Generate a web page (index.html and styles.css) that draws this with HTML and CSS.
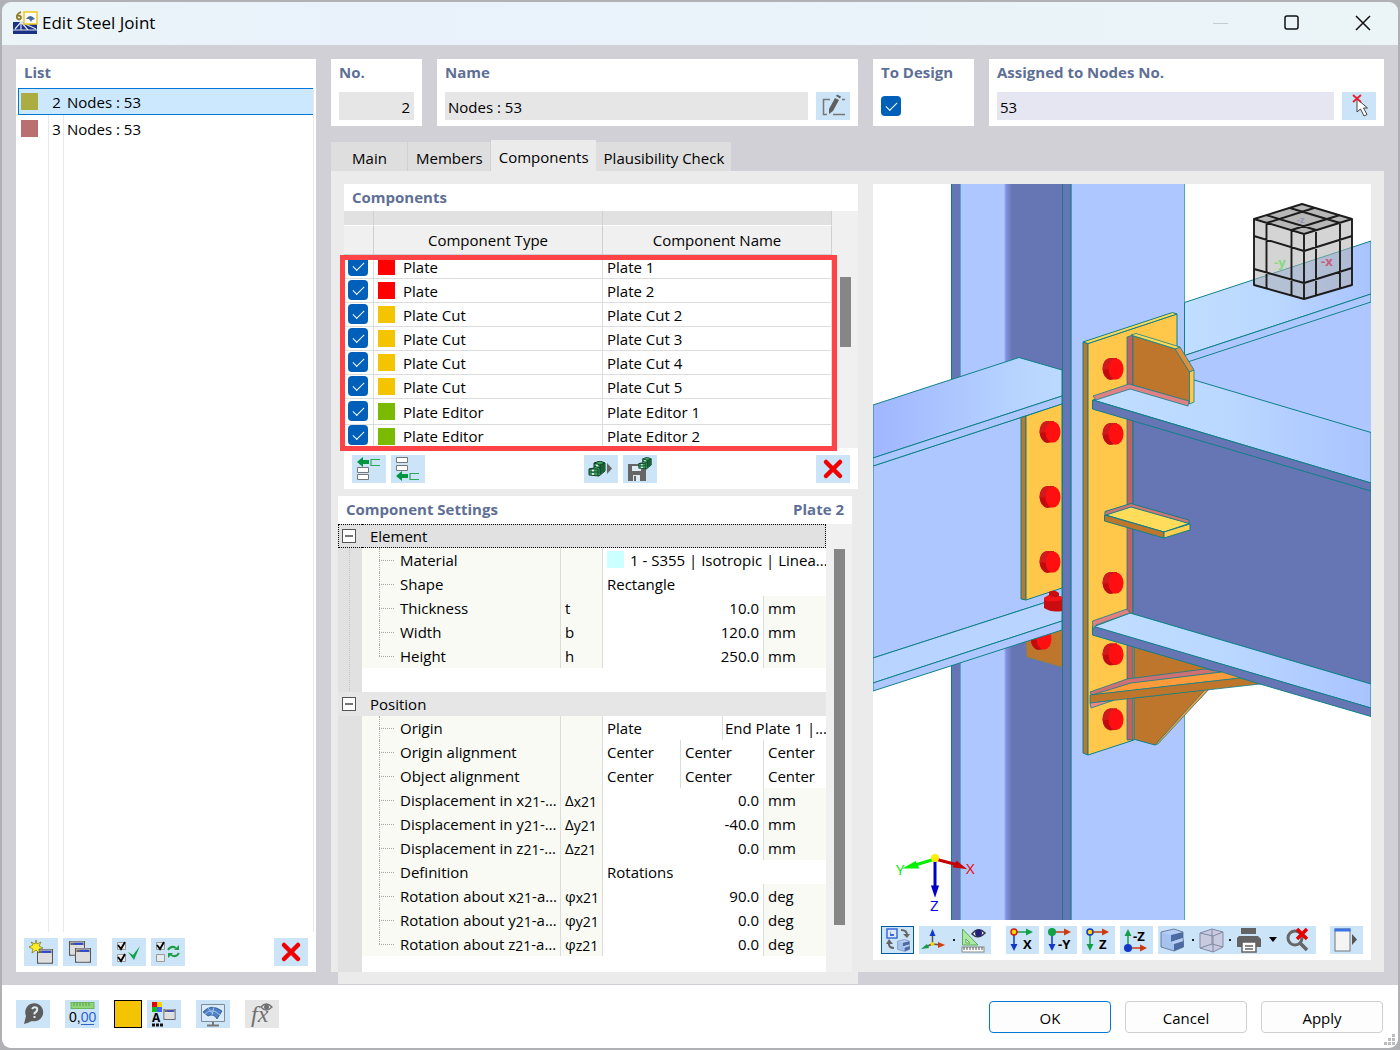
FILE: index.html
```html
<!DOCTYPE html>
<html lang="en">
	<head>
		<meta charset="utf-8"/>
		<title>Edit Steel Joint</title>
		<link rel="stylesheet" href="styles.css">
	</head>
	<body>
		<svg class="defs" aria-hidden="true">
			<symbol id="i-delete" viewBox="0 0 34 28">
				<path d="M10 7 L24 21 M24 7 L10 21" stroke="#f00000" stroke-width="4.5" stroke-linecap="round"/>
			</symbol>
			<symbol id="i-window" viewBox="0 0 16 16">
				<rect x="0" y="0" width="16" height="15" fill="#fff" stroke="#555" stroke-width="1.5"/>
				<path d="M1 3 H15" stroke="#666" stroke-width="3"/>
				<path d="M5 3 H14" stroke="#2b48e0" stroke-width="2"/>
				<rect x="1" y="5" width="14" height="9.500" fill="#dedede"/>
			</symbol>
			<symbol id="i-cabinet" viewBox="0 0 18 16">
				<path d="M1 8 L6 7 V2 L12 0 L17 2 V10 L11 15 L1 14 Z" fill="#3aa364" stroke="#163c26"/>
				<path d="M12 4 L17 2 V10 L12 13 Z" fill="#176638"/>
				<path d="M1 8 H10 V15 M1 11 H10 M6 2 L12 4 V13 M6 5 L12 7 M12 4 L17 2" fill="none" stroke="#163c26"/>
				<circle cx="5" cy="9.500" r="1" fill="#fff"/><circle cx="5" cy="13" r="1" fill="#fff"/><circle cx="9" cy="4.500" r="1" fill="#fff"/>
			</symbol>
			<symbol id="i-solid" viewBox="0 0 24 24">
				<path d="M1 4 L14 1 L23 4 L11 7 Z" fill="#b5cdf5"/>
				<path d="M1 4 L11 7 V14 L14 16 V23 L1 19 Z" fill="#a6c2ee"/>
				<path d="M11 7 L23 4 V10 L11 14 Z" fill="#4c6ba3"/>
				<path d="M11 14 L23 10 L23.500 13 L14 16 Z" fill="#b5cdf5"/>
				<path d="M14 16 L23.500 13 V19 L14 23 Z" fill="#4c6ba3"/>
				<path d="M1 4 L14 1 L23 4 V10 L23.500 13 V19 L14 23 L1 19 Z" fill="none" stroke="#53688e" stroke-width=".8"/>
			</symbol>
		</svg>

		<div class="window">
			<header class="titlebar">
				<svg class="appIcon" viewBox="0 0 25 24">
					<rect x="0" y="11" width="24" height="12" fill="#1c3183"/>
					<path d="M0 19 H24 M2 18 L8 11 L15 19 M8 11 V19 M8 11 L23 18" stroke="#dbe4f0" stroke-width="1.200" fill="none"/>
					<rect x="11" y="1" width="13" height="12" fill="#fff" stroke="#f1c91d" stroke-width="1.500"/>
					<path d="M13 8 Q17 2 22 8 L19 9 L18 11 L16 8 Z" fill="#43699d"/>
					<path d="M8 1 Q3 3 4 7 Q6 10 8 7 Q8 4 5 5" fill="none" stroke="#8b7b1e" stroke-width="1.800"/>
				</svg>
				<h1 class="title">Edit Steel Joint</h1>
				<button class="winBtn" type="button" aria-label="Minimize">
					<svg viewBox="0 0 18 18"><path d="M1 9.500 H16" stroke="#c6cdd0"/></svg>
				</button>
				<button class="winBtn" type="button" aria-label="Maximize">
					<svg viewBox="0 0 18 18"><rect x="2" y="2" width="13" height="13" rx="2" fill="none" stroke="#111" stroke-width="1.500"/></svg>
				</button>
				<button class="winBtn" type="button" aria-label="Close">
					<svg viewBox="0 0 18 18"><path d="M2 2 L16 16 M16 2 L2 16" stroke="#111" stroke-width="1.500"/></svg>
				</button>
			</header>

			<main class="content">
				<section class="card listCard">
					<h2 class="heading">List</h2>
					<div class="list">
						<table class="listTable">
							<tr class="selected">
								<td class="listColor"><span class="swatch olive"></span></td>
								<td class="listNo">2</td>
								<td class="listName">Nodes : 53</td>
							</tr>
							<tr>
								<td class="listColor"><span class="swatch rose"></span></td>
								<td class="listNo">3</td>
								<td class="listName">Nodes : 53</td>
							</tr>
						</table>
					</div>
					<div class="toolbar listTools">
						<button class="tool" type="button" aria-label="New">
							<svg viewBox="0 0 34 28">
								<use href="#i-window" x="13" y="11" width="16" height="15"/>
								<path d="M12 2 L13 6 L17 4 L15 8 L19 10 L15 11 L15 15 L12 12 L8 15 L9 11 L5 9 L9 7 L7 4 L11 6 Z" fill="#ffee22" stroke="#76701a" stroke-width=".7"/>
							</svg>
						</button>
						<button class="tool" type="button" aria-label="Copy">
							<svg viewBox="0 0 34 28">
								<use href="#i-window" x="6" y="3" width="16" height="15"/>
								<use href="#i-window" x="12" y="10" width="16" height="15"/>
							</svg>
						</button>
						<button class="tool spaced" type="button" aria-label="Select all">
							<svg viewBox="0 0 34 28">
								<path d="M5.500 4.500 h8 v7 h-8 z M5.500 16.500 h8 v7 h-8 z" fill="#eee" stroke="#999"/>
								<path d="M6 7 L9 11 L13 4 M6 19 L9 23 L13 16" fill="none" stroke="#000" stroke-width="1.800"/>
								<path d="M16 14 L21 17 L28 8 L22 22 Z" fill="#12a24b"/>
							</svg>
						</button>
						<button class="tool" type="button" aria-label="Invert selection">
							<svg viewBox="0 0 34 28">
								<path d="M5.500 4.500 h8 v7 h-8 z M5.500 16.500 h8 v7 h-8 z" fill="#e5edf2" stroke="#999"/>
								<path d="M6 7 L9 11 L13 4" fill="none" stroke="#000" stroke-width="1.800"/>
								<path d="M17 12 Q20 7 25 10 M28 15 Q25 20 20 17" fill="none" stroke="#1f9d48" stroke-width="2"/>
								<path d="M28 7 V12 H23 Z M17 20 V15 H22 Z" fill="#1f9d48"/>
							</svg>
						</button>
						<button class="tool last" type="button" aria-label="Delete"><svg viewBox="0 0 34 28"><use href="#i-delete"/></svg></button>
					</div>
				</section>

				<div class="editor">
					<div class="topCards">
						<div class="topLeft">
							<div class="card field noField">
								<label class="heading" for="no">No.</label>
								<input class="textBox right" id="no" type="text" value="2" readonly>
							</div>
							<div class="card field grow">
								<label class="heading" for="name">Name</label>
								<div class="fieldRow">
									<input class="textBox" id="name" type="text" value="Nodes : 53" readonly>
									<button class="tool" type="button" aria-label="Edit name">
										<svg viewBox="0 0 34 28">
											<path d="M14 7.500 H7.500 V22.500 H11 M17 22.500 H29 M26 7.500 H29" fill="none" stroke="#777" stroke-width="1.500"/>
											<path d="M13 17 L19 6 L23 8 L17 19 L13 22 Z" fill="#5f5f5f"/>
											<path d="M20 4 L21 2.500 L25 4.500 L24 6.500 Z" fill="#5f5f5f"/>
										</svg>
									</button>
								</div>
							</div>
						</div>
						<div class="topRight">
							<div class="card field designField">
								<label class="heading" for="design">To Design</label>
								<div class="fieldRow"><input class="check" id="design" type="checkbox" checked></div>
							</div>
							<div class="card field grow">
								<label class="heading" for="nodes">Assigned to Nodes No.</label>
								<div class="fieldRow">
									<input class="textBox lilac" id="nodes" type="text" value="53">
									<button class="tool" type="button" aria-label="Pick nodes">
										<svg viewBox="0 0 34 28">
											<path d="M15 7 V20 L18.500 17 L22 24 L25 22.500 L21.500 16 H25.500 Z" fill="#fff" stroke="#444"/>
											<path d="M11 3 L19 10 M19 3 L11 10" stroke="#e5202c" stroke-width="1.800"/>
										</svg>
									</button>
								</div>
							</div>
						</div>
					</div>

					<nav class="tabs">
						<button class="tab first" type="button">Main</button>
						<button class="tab" type="button">Members</button>
						<button class="tab active" type="button">Components</button>
						<button class="tab" type="button">Plausibility Check</button>
					</nav>

					<div class="tabPanel">
						<div class="leftPane">
							<section class="card components">
								<h2 class="heading">Components</h2>
								<div class="gridWrap">
									<table class="grid">
										<colgroup><col class="colCheck"><col><col></colgroup>
										<thead>
											<tr class="letters"><th></th><th></th><th></th></tr>
											<tr><th></th><th>Component Type</th><th>Component Name</th></tr>
										</thead>
										<tbody>
											<tr><td><input class="check" type="checkbox" aria-label="Plate 1" checked></td><td><span class="swatch red"></span>Plate</td><td>Plate 1</td></tr>
											<tr><td><input class="check" type="checkbox" aria-label="Plate 2" checked></td><td><span class="swatch red"></span>Plate</td><td>Plate 2</td></tr>
											<tr><td><input class="check" type="checkbox" aria-label="Plate Cut 2" checked></td><td><span class="swatch amber"></span>Plate Cut</td><td>Plate Cut 2</td></tr>
											<tr><td><input class="check" type="checkbox" aria-label="Plate Cut 3" checked></td><td><span class="swatch amber"></span>Plate Cut</td><td>Plate Cut 3</td></tr>
											<tr><td><input class="check" type="checkbox" aria-label="Plate Cut 4" checked></td><td><span class="swatch amber"></span>Plate Cut</td><td>Plate Cut 4</td></tr>
											<tr><td><input class="check" type="checkbox" aria-label="Plate Cut 5" checked></td><td><span class="swatch amber"></span>Plate Cut</td><td>Plate Cut 5</td></tr>
											<tr class="tall"><td><input class="check" type="checkbox" aria-label="Plate Editor 1" checked></td><td><span class="swatch green"></span>Plate Editor</td><td>Plate Editor 1</td></tr>
											<tr class="bottom"><td><input class="check" type="checkbox" aria-label="Plate Editor 2" checked></td><td><span class="swatch green"></span>Plate Editor</td><td>Plate Editor 2</td></tr>
										</tbody>
									</table>
									<div class="track"><div class="thumb gridThumb"></div></div>
									<div class="marker"></div>
								</div>
								<div class="toolbar componentTools">
									<button class="tool" type="button" aria-label="Insert before">
										<svg viewBox="0 0 34 28">
											<path d="M5.500 12.500 h11 v5 h-11 z M5.500 19.500 h11 v5 h-11 z" fill="#fff" stroke="#777"/>
											<path d="M28 4.500 H19 V10.500 H28" fill="none" stroke="#2fa45b" stroke-width="1.200"/>
											<path d="M5 7 L11 2 V5 H17 V9 H11 V12 Z" fill="#009540"/>
										</svg>
									</button>
									<button class="tool" type="button" aria-label="Insert after">
										<svg viewBox="0 0 34 28">
											<path d="M5.500 2.500 h11 v5 h-11 z M5.500 10.500 h11 v5 h-11 z" fill="#fff" stroke="#777"/>
											<path d="M28 18.500 H19 V24.500 H28" fill="none" stroke="#2fa45b" stroke-width="1.200"/>
											<path d="M5 21 L11 16 V19 H17 V23 H11 V26 Z" fill="#009540"/>
										</svg>
									</button>
									<button class="tool library" type="button" aria-label="Load from library">
										<svg viewBox="0 0 34 28"><use href="#i-cabinet" x="4" y="6" width="18" height="16"/><path d="M23 8 L28 13.500 L23 19 Z" fill="#666"/></svg>
									</button>
									<button class="tool" type="button" aria-label="Save to library">
										<svg viewBox="0 0 34 28">
											<path d="M5 9 H19 L23 14 V26 H5 Z" fill="#666"/>
											<path d="M9 11 H18 V16 H9 Z M10 20 H17 V26 H10 Z" fill="#dfeaf2"/>
											<path d="M12 21 V26" stroke="#666" stroke-width="2"/>
											<use href="#i-cabinet" x="15" y="2" width="14" height="13"/>
										</svg>
									</button>
									<button class="tool last" type="button" aria-label="Delete component"><svg viewBox="0 0 34 28"><use href="#i-delete"/></svg></button>
								</div>
							</section>

							<section class="card settings">
								<h2 class="heading between"><span>Component Settings</span><span>Plate 2</span></h2>
								<div class="gridWrap settingsBody">
									<div class="treeWrap">
										<table class="tree">
											<colgroup>
												<col class="cGutter"><col class="cLabel"><col class="cSymbol"><col class="cV1"><col class="cV2"><col class="cV3"><col class="cUnit">
											</colgroup>
											<tr class="group focus"><td><button class="toggle" type="button" aria-label="Collapse Element"></button></td><td colspan="6">Element</td></tr>
											<tr class="line"><td></td><td>Material</td><td></td><td class="tight" colspan="4"><span class="swatch aqua"></span>1 - S355 | Isotropic | Linea...</td></tr>
											<tr class="line"><td></td><td>Shape</td><td></td><td colspan="4">Rectangle</td></tr>
											<tr class="line"><td></td><td>Thickness</td><td>t</td><td class="num" colspan="3">10.0</td><td class="unit">mm</td></tr>
											<tr class="line"><td></td><td>Width</td><td>b</td><td class="num" colspan="3">120.0</td><td class="unit">mm</td></tr>
											<tr class="line end"><td></td><td>Height</td><td>h</td><td class="num" colspan="3">250.0</td><td class="unit">mm</td></tr>
											<tr class="blank"><td></td><td colspan="6"></td></tr>
											<tr class="group"><td><button class="toggle" type="button" aria-label="Collapse Position"></button></td><td colspan="6">Position</td></tr>
											<tr class="line"><td></td><td>Origin</td><td></td><td colspan="2">Plate</td><td class="cut tight" colspan="2">End Plate 1 |...</td></tr>
											<tr class="line"><td></td><td>Origin alignment</td><td></td><td>Center</td><td class="cut" colspan="2">Center</td><td class="cut">Center</td></tr>
											<tr class="line"><td></td><td>Object alignment</td><td></td><td>Center</td><td class="cut" colspan="2">Center</td><td class="cut">Center</td></tr>
											<tr class="line"><td></td><td>Displacement in x<sub>21</sub>-axis</td><td>Δ<sub>x21</sub></td><td class="num" colspan="3">0.0</td><td class="unit">mm</td></tr>
											<tr class="line"><td></td><td>Displacement in y<sub>21</sub>-axis</td><td>Δ<sub>y21</sub></td><td class="num" colspan="3">-40.0</td><td class="unit">mm</td></tr>
											<tr class="line"><td></td><td>Displacement in z<sub>21</sub>-axis</td><td>Δ<sub>z21</sub></td><td class="num" colspan="3">0.0</td><td class="unit">mm</td></tr>
											<tr class="line"><td></td><td>Definition</td><td></td><td colspan="4">Rotations</td></tr>
											<tr class="line"><td></td><td>Rotation about x<sub>21</sub>-axis</td><td>φ<sub>x21</sub></td><td class="num" colspan="3">90.0</td><td class="unit">deg</td></tr>
											<tr class="line"><td></td><td>Rotation about y<sub>21</sub>-axis</td><td>φ<sub>y21</sub></td><td class="num" colspan="3">0.0</td><td class="unit">deg</td></tr>
											<tr class="line end"><td></td><td>Rotation about z<sub>21</sub>-axis</td><td>φ<sub>z21</sub></td><td class="num" colspan="3">0.0</td><td class="unit">deg</td></tr>
										</table>
									</div>
									<div class="track"><div class="thumb treeThumb"></div></div>
								</div>
							</section>
							<div class="strip"></div>
						</div>

						<section class="card view">
							<div class="sceneBox">
							<svg class="scene" viewBox="873 184 498 736" preserveAspectRatio="xMidYMid slice">
								<defs>
									<linearGradient id="fillet"><stop offset="0" stop-color="#aec7ff"/><stop offset=".25" stop-color="#8092de"/><stop offset="1" stop-color="#6675b4"/></linearGradient>
									<linearGradient id="topLeft"><stop offset="0" stop-color="#a0b6ff"/><stop offset=".8" stop-color="#b8d5ff"/><stop offset="1" stop-color="#bcdaff"/></linearGradient>
									<linearGradient id="topRight"><stop offset="0" stop-color="#c0deff"/><stop offset=".5" stop-color="#bad7ff"/><stop offset="1" stop-color="#a9c3ff"/></linearGradient>
									<g id="bolt">
										<path d="M-10.500 0 Q-10 -10 -3 -11 L4 -11 V10 L-3 11 Q-10 9 -10.500 0 Z" fill="#c00c10"/>
										<path d="M-3 -11 L4 -11 L-3 0 L-10.500 1 Q-10 -10 -3 -11 Z" fill="#d01a1d"/>
										<ellipse cx="3" cy="0" rx="7.500" ry="10.500" fill="#ff0f10"/>
									</g>
								</defs>
								<rect x="700" y="0" width="900" height="1100" fill="#fff"/>

								<!-- column -->
								<g stroke="#0f8088">
									<rect x="951.500" y="100" width="9" height="900" fill="#6675b4"/>
									<rect x="960.500" y="100" width="45" height="900" fill="#aec7ff" stroke="none"/>
									<rect x="1012" y="100" width="50" height="900" fill="#6675b4" stroke="none"/>
									<rect x="1004" y="100" width="8" height="900" fill="url(#fillet)" stroke="none"/>
									<rect x="1071" y="100" width="113.500" height="900" fill="#aec7ff" stroke="#4fa6b6"/>
								</g>

								<!-- bracket below the left beam -->
								<path d="M1026 640 L1062 628 V667 L1027 657 Z" fill="#be762d" stroke="#7a8850" stroke-width=".7"/>
								<use href="#bolt" x="1041" y="639"/>

								<!-- left beam -->
								<g stroke="#0f8088">
									<path d="M873 466 L1062 404 V597 L873 658 Z" fill="#aec7ff"/>
									<path d="M873 405 L1019 357.500 L1062 370 V396 L873 458 Z" fill="url(#topLeft)"/>
									<path d="M873 458 L1062 396 V404 L873 466 Z" fill="#aec7ff"/>
									<path d="M873 658 L1062 597 V621 L873 683 Z" fill="#b8d4ff"/>
									<path d="M873 683 L1062 621 V630 L873 691 Z" fill="#aec7ff"/>
									<path d="M1021 417.500 L1026 416 V600 L1021 599 Z" fill="#be762d"/>
									<path d="M1026 416 L1062 404 V588 L1026 600 Z" fill="#ffc84b"/>
								</g>
								<use href="#bolt" x="1050" y="432"/>
								<use href="#bolt" x="1050" y="497"/>
								<use href="#bolt" x="1050" y="562"/>
								<path d="M1044 598 L1049 595 V592 Q1054 589 1059 593 V596 L1062 597 V611 Q1052 613 1044 608 Z" fill="#c80c10"/>
								<path d="M1044 598 L1049 595 Q1054 599 1059 596 L1062 597 V600 Q1052 603 1044 600 Z" fill="#f01416"/>
								<rect x="1062.500" y="100" width="8.500" height="900" fill="#6675b4" stroke="#0f8088"/>

								<!-- right beam behind -->
								<g stroke="#0f8088">
									<path d="M1184.500 363 L1371 302 V433 L1184 380 Z" fill="#aec7ff" stroke="none"/>
									<path d="M1184.500 302.500 L1371 241 V294 L1184.500 355.500 Z" fill="url(#topRight)"/>
									<path d="M1184.500 355.500 L1371 294 V302 L1184.500 363 Z" fill="#aec7ff"/>
								</g>

								<!-- lower gusset -->
								<g stroke="#0f8088">
									<path d="M1130 640 L1220 670 L1130 680 Z" fill="#be762d"/>
									<path d="M1133 698 L1209 689 L1155 745 L1133 739 Z" fill="#be762d"/>
									<path d="M1205 689.500 L1210 688 L1158 744 L1155 745 Z" fill="#f7993b" stroke-width=".7"/>
								</g>

								<!-- end plate -->
								<g stroke="#0f8088">
									<path d="M1083 342 L1088 343.500 V755 L1083 753 Z" fill="#be762d"/>
									<path d="M1088 343.500 L1177 314 V400 L1134 420 V740 L1088 755 Z" fill="#ffc84b"/>
									<path d="M1083 342 L1172.500 312.500 L1177 314 L1088 343.500 Z" fill="#ffdb59"/>
									<path d="M1127 337 L1133 335 V740 L1127 740 Z" fill="#c06264" stroke-width=".8"/>
								</g>

								<!-- front beam -->
								<g stroke="#0f8088">
									<path d="M1133 420 L1371 490 V684 L1133 614 Z" fill="#6675b4"/>
									<path d="M1093 400 L1130 388 L1194 380 L1371 432.500 V483 Z" fill="url(#topRight)"/>
									<path d="M1092.500 400 L1371 483 V491 L1092.500 409 Z" fill="#6675b4"/>
									<path d="M1093 627 L1130 613 L1371 684 V708 Z" fill="url(#topRight)"/>
									<path d="M1092.500 626 L1371 708 V716.500 L1092.500 635 Z" fill="#6675b4"/>
								</g>

								<!-- upper stiffener -->
								<g stroke="#0f8088" stroke-width=".8">
									<path d="M1133 336 L1176 349 L1189.500 372 V402 L1133 385 Z" fill="#be762d"/>
									<path d="M1131 335 L1136 333.500 L1180 347 L1176 349 Z" fill="#ffdb59"/>
									<path d="M1175 349 L1180 347 L1194 370 L1189.500 372 Z" fill="#dc9040"/>
									<path d="M1093 396 L1129 384 L1189 401 L1188 406 L1130 389 L1096 400 Z" fill="#df8084"/>
									<path d="M1189.500 372 L1194 370 V402 L1189.500 404 Z" fill="#ffc84b"/>
									<path d="M1093 630 L1092.500 621 L1127 609 L1130 613 L1096 625 Z" fill="#df8084"/>
								</g>

								<!-- middle tab -->
								<g stroke="#0f8088">
									<path d="M1105 511.500 L1131 503.500 L1189 520 V525 L1131 508 L1105 516 Z" fill="#cf7376"/>
									<path d="M1106 515 L1131 507 L1189 523.500 L1164 532 Z" fill="#ffdc5a"/>
									<path d="M1104.500 515 L1164 532 V538 L1104.500 521 Z" fill="#be762d"/>
									<path d="M1164 532 L1190 524 V530 L1164 538 Z" fill="#ffcf50"/>
								</g>

								<!-- sloped stiffener -->
								<g stroke="#0f8088" stroke-width=".8">
									<path d="M1090 692 L1127 679 L1205 669 L1222 672 L1130 684 L1092 696 Z" fill="#cf7074"/>
									<path d="M1092 695 L1131 683 L1222 672 L1241 678 Z" fill="#fb9b3c"/>
									<path d="M1090 695 L1240 678 L1260 684 L1090 703 Z" fill="#be762d"/>
									<path d="M1090 703 L1113 700.500 L1091 708 Z" fill="#ef878a"/>
								</g>
								<use href="#bolt" x="1113" y="369"/>
								<use href="#bolt" x="1113" y="434"/>
								<use href="#bolt" x="1113" y="583"/>
								<use href="#bolt" x="1113" y="654.500"/>
								<use href="#bolt" x="1113" y="719.500"/>

								<!-- view cube -->
								<g class="cube">
									<path d="M1254 219 L1302 204 L1352 219 L1304 234 Z" fill="#aaa" fill-opacity=".85"/>
									<path d="M1254 219 L1304 234 V299 L1254 285 Z" fill="#b0b0b0" fill-opacity=".55"/>
									<path d="M1304 234 L1352 219 V285 L1304 299 Z" fill="#b0b0b0" fill-opacity=".55"/>
									<path d="M1254 219 L1302 204 L1352 219 V285 L1304 299 L1254 285 Z M1254 219 L1304 234 L1352 219 M1304 234 V299 M1266 215 L1316 230 V296 M1290 208 L1340 223 V289 M1314 208 L1266.500 223 V289 M1340 215 L1291.500 230 V296 M1254 236 L1304 251 L1352 236 M1254 269 L1304 283 L1352 268" fill="none" stroke="#1c1c1c" stroke-width="1.900" stroke-linejoin="round"/>
									<text x="1274" y="267" fill="#82dc82">-y</text>
									<text x="1321" y="266" fill="#cc5b7c">-x</text>
									<text x="1297" y="223" fill="#9292c0" class="cubeTop">-z</text>
								</g>

								<!-- axes -->
								<g stroke-width="3">
									<path d="M935 859 L912 866" stroke="#00f000"/>
									<path d="M908 867 L915 863 L917 867 Z" fill="#00f000" stroke="#00f000"/>
									<path d="M935 859 L958 865" stroke="#c80000"/>
									<path d="M962 867 L957 863 L955 866 Z" fill="#c80000" stroke="#c80000"/>
									<path d="M935 859 V890" stroke="#0000c8"/>
									<path d="M935 893 L933 887 H937 Z" fill="#0000c8" stroke="#0000c8"/>
									<circle cx="935" cy="858" r="4" fill="#ffee00"/>
								</g>
								<g class="axisText">
									<text x="896" y="875" fill="#00e800">Y</text>
									<text x="966" y="874" fill="#f00000">X</text>
									<text x="930" y="911" fill="#0000f0">Z</text>
								</g>
							</svg>
							</div>

							<div class="toolbar viewTools">
								<button class="tool pressed" type="button" aria-label="Toggle view">
									<svg viewBox="0 0 34 28">
										<rect x="6" y="3" width="10" height="9" fill="#dfe9fa" stroke="#3a6bd6" stroke-width="1.500"/>
										<path d="M9 5 V10 H13 V8 H10" fill="#3a6bd6"/>
										<path d="M20 4 Q26 4 26 9 M8 16 Q7 22 13 22" fill="none" stroke="#666" stroke-width="2"/>
										<path d="M22 8 H29 L26 12 Z M5 18 L8 13 L12 18 Z" fill="#666"/>
										<use href="#i-solid" x="16" y="13" width="13" height="13"/>
									</svg>
								</button>
								<div class="toolGroup">
									<button class="tool" type="button" aria-label="Axes">
										<svg viewBox="0 0 34 28">
											<path d="M13.500 18 V7 M13.500 18 L6 21 M13.500 18 L22 19" stroke="#555" stroke-width="1.500"/>
											<path d="M13.500 3 L16.500 10 H10.500 Z" fill="#1238d0"/><path d="M2 23 L8 18 L10 22 Z" fill="#149c47"/><path d="M26 19 L19 16 V22 Z" fill="#d53b0c"/><circle cx="13.500" cy="18" r="2" fill="#ffd500"/>
										</svg>
									</button>
									<span class="dot"></span>
									<button class="tool" type="button" aria-label="Show dimensions">
										<svg viewBox="0 0 34 28">
											<path d="M6.500 3 V19 H22 Z" fill="#aee8a4" stroke="#5aa955"/><path d="M10 13 V17 H14 Z" fill="#fff" stroke="#5aa955"/>
											<rect x="6" y="21" width="22" height="5" fill="#fff" stroke="#888"/><path d="M8 21 V24 M11 21 V24 M14 21 V24 M17 21 V24 M20 21 V24 M23 21 V24 M26 21 V24" stroke="#555"/>
											<path d="M16 8 Q22 0 29 7 Q22 14 16 8 Z" fill="#fff" stroke="#33334d" stroke-width="1.500"/><circle cx="22.500" cy="7" r="3.500" fill="#21217c"/>
										</svg>
									</button>
								</div>
								<button class="tool spaced" type="button" aria-label="View X">
									<svg viewBox="0 0 34 28">
										<path d="M8 6 H24" stroke="#14a04a" stroke-width="1.500"/><path d="M27 6 L20 2.500 V9.500 Z" fill="#14a04a"/>
										<path d="M8 6 V20" stroke="#1238c8" stroke-width="1.500"/><path d="M8 25 L4.500 18 H11.500 Z" fill="#1238c8"/>
										<circle cx="8" cy="6" r="3" fill="#ffd500" stroke="#cc2010" stroke-width="1.500"/><text x="17" y="23" class="iconText">X</text>
									</svg>
								</button>
								<button class="tool" type="button" aria-label="View -Y">
									<svg viewBox="0 0 34 28">
										<path d="M8 6 H24" stroke="#cc3a10" stroke-width="1.500"/><path d="M27 6 L20 2.500 V9.500 Z" fill="#cc3a10"/>
										<path d="M8 6 V20" stroke="#1238c8" stroke-width="1.500"/><path d="M8 25 L4.500 18 H11.500 Z" fill="#1238c8"/>
										<circle cx="8" cy="6" r="4" fill="#14a04a"/><text x="14" y="23" class="iconText">-Y</text>
									</svg>
								</button>
								<button class="tool" type="button" aria-label="View Z">
									<svg viewBox="0 0 34 28">
										<path d="M8 6 H24" stroke="#cc3a10" stroke-width="1.500"/><path d="M27 6 L20 2.500 V9.500 Z" fill="#cc3a10"/>
										<path d="M8 6 V20" stroke="#14a04a" stroke-width="1.500"/><path d="M8 25 L4.500 18 H11.500 Z" fill="#14a04a"/>
										<circle cx="8" cy="6" r="3" fill="#ffd500" stroke="#1238c8" stroke-width="1.500"/><text x="17" y="23" class="iconText">Z</text>
									</svg>
								</button>
								<button class="tool" type="button" aria-label="View -Z">
									<svg viewBox="0 0 34 28">
										<path d="M8 22 H24" stroke="#cc3a10" stroke-width="1.500"/><path d="M27 22 L20 18.500 V25.500 Z" fill="#cc3a10"/>
										<path d="M8 22 V8" stroke="#14a04a" stroke-width="1.500"/><path d="M8 3 L4.500 10 H11.500 Z" fill="#14a04a"/>
										<circle cx="8" cy="22" r="4" fill="#1238c8"/><text x="13" y="15" class="iconText">-Z</text>
									</svg>
								</button>
								<div class="toolGroup">
									<button class="tool" type="button" aria-label="Solid display"><svg viewBox="0 0 34 28"><use href="#i-solid" x="2" y="2" width="24" height="24"/></svg></button>
									<span class="dot"></span>
									<button class="tool" type="button" aria-label="Box display">
										<svg viewBox="0 0 34 28">
											<path d="M5 7 L17 3 L28 6 V21 L18 26 L5 22 Z" fill="#c8cbe0" stroke="#8388a3"/>
											<path d="M5 7 L18 10 L28 6 M18 10 V26 M17 3 V18 L5 22 M17 18 L28 21" fill="none" stroke="#8388a3"/>
										</svg>
									</button>
									<span class="dot"></span>
									<button class="tool" type="button" aria-label="Print">
										<svg viewBox="0 0 34 28">
											<path d="M9 2 H24 V8 H9 Z M7 10 H26 L29 13 V21 H5 V12 Z" fill="#636363"/>
											<path d="M10 16 H24 V26 H10 Z" fill="#fff" stroke="#636363" stroke-width="1.500"/><path d="M13 20 H21 M13 23 H21" stroke="#636363" stroke-width="1.500"/>
										</svg>
									</button>
									<svg class="caret" viewBox="0 0 10 6"><path d="M1 0 H9 L5 5 Z" fill="#000"/></svg>
									<button class="tool" type="button" aria-label="Clear zoom">
										<svg viewBox="0 0 34 28">
											<circle cx="14" cy="12" r="7" fill="none" stroke="#666" stroke-width="3"/><path d="M19 17 L26 24" stroke="#666" stroke-width="3.500"/>
											<path d="M16 3 L26 13 M26 3 L16 13" stroke="#e80000" stroke-width="3.500"/>
										</svg>
									</button>
								</div>
								<button class="tool last" type="button" aria-label="Side panel">
									<svg viewBox="0 0 34 28">
										<rect x="5" y="3" width="15" height="22" fill="#f4f4f4" stroke="#777"/><rect x="4.500" y="2.500" width="16" height="3" fill="#3a72e4"/><path d="M22 8 L27 13.500 L22 19 Z" fill="#555"/>
									</svg>
								</button>
							</div>
						</section>
					</div>
				</div>
			</main>

			<footer class="footer">
				<button class="tool" type="button" aria-label="Help">
					<svg viewBox="0 0 34 28">
						<path d="M8 24 L10 16 A9 9 0 1 1 16 21 Q12 23 8 24 Z" fill="#5d5d5d"/>
						<path d="M16 9 Q18 6 21 8 Q22 11 18.500 13 V14.500 M18.500 16 V18" fill="none" stroke="#dcebf5" stroke-width="2"/>
					</svg>
				</button>
				<button class="tool" type="button" aria-label="Units">
					<svg viewBox="0 0 34 28">
						<rect x="6" y="2.500" width="23" height="6" fill="#8ed67a" stroke="#6db45e"/><path d="M9 3 V6 M12 3 V6 M15 3 V6 M18 3 V6 M21 3 V6 M24 3 V6" stroke="#5b9a4f"/>
						<text x="4" y="22" class="iconNum">0,<tspan fill="#2e62d9">00</tspan></text><path d="M16 24.500 H29" stroke="#2e62d9"/>
					</svg>
				</button>
				<button class="colorBtn" type="button" aria-label="Color"></button>
				<button class="tool afterColor" type="button" aria-label="Display properties">
					<svg viewBox="0 0 34 28">
						<path d="M5 2 h5 v5 h-5z" fill="#e80000"/><path d="M10 2 h5 v5 h-5z" fill="#ffd500"/><path d="M5 7 h5 v5 h-5z" fill="#10c010"/><path d="M10 7 h5 v5 h-5z" fill="#4860ff"/>
						<use href="#i-window" x="16" y="9" width="13" height="11"/>
						<text x="5" y="22" class="iconText small">A</text><path d="M5 25 H17" stroke="#111" stroke-width="3" stroke-dasharray="3 1"/>
					</svg>
				</button>
				<button class="tool" type="button" aria-label="Show in viewer">
					<svg viewBox="0 0 34 28">
						<path d="M5.500 4.500 H28.500 V21.500 H5.500 Z" fill="#d9eafa" stroke="#7e8c95"/><path d="M17 22 V26 M11 25.500 H23" stroke="#777" stroke-width="2"/>
						<path d="M7 12 Q15 3 26 11 L21 19 Q18 13 12 16 Z" fill="#4d82ca" stroke="#27476f" stroke-width=".7"/><path d="M12 8 L17 14 M18 7 L16 15 M9 14 Q16 7 24 15" fill="none" stroke="#c3dcf5" stroke-width=".7"/>
					</svg>
				</button>
				<button class="tool off" type="button" aria-label="Formula" disabled>
					<svg viewBox="0 0 34 28">
						<text x="6" y="22" class="iconFx">fx</text>
						<path d="M16 7 Q21 1 27 7 Q21 13 16 7 Z" fill="#e6e6e6" stroke="#707070" stroke-width="1.300"/><circle cx="21.500" cy="7" r="2.500" fill="#707070"/>
					</svg>
				</button>
				<div class="actions">
					<button class="action primary" type="button">OK</button>
					<button class="action" type="button">Cancel</button>
					<button class="action" type="button">Apply</button>
				</div>
				<svg class="grip" viewBox="0 0 12 12"><path d="M8 0 h3 v3 h-3z M8 4 h3 v3 h-3z M4 4 h3 v3 h-3z M0 8 h3 v3 h-3z M4 8 h3 v3 h-3z M8 8 h3 v3 h-3z" fill="#bcbcbc"/></svg>
			</footer>
		</div>
	</body>
</html>
```

FILE: styles.css
```css
* {
	box-sizing : border-box;
}

body {
	display     : flex;
	min-height  : 100vh;
	margin      : 0;
	padding     : 2px;
	background  : #b0b1b4;
	color       : #000;
	font-family : 'Open Sans', 'Noto Sans', sans-serif;
	font-size   : 15px;
	line-height : 24px;
}

button, input {
	font  : inherit;
	color : inherit;
}

h1, h2 {
	margin : 0;
}

svg {
	display : block;
}

.defs {
	position : absolute;
	width    : 0;
	height   : 0;
}

.window {
	display        : flex;
	flex-direction : column;
	flex           : 1;
	min-width      : 0;
	overflow       : hidden;
	border-radius  : 9px;
	background     : #d1d0d6;
}

/* title bar */
.titlebar {
	display     : flex;
	align-items : center;
	height      : 43px;
	padding     : 0 26px 2px 11px;
	background  : linear-gradient(90deg, #ebf4f7, #e9f2fb 25%, #ebf4f7);
}

.appIcon {
	width  : 25px;
	height : 24px;
}

.title {
	flex        : 1;
	margin-left : 4px;
	font-size   : 17px;
	font-weight : 400;
}

.winBtn {
	width       : 18px;
	height      : 18px;
	margin-left : 53px;
	padding     : 0;
	border      : 0;
	background  : none;
}

/* layout */
.content {
	display : flex;
	flex    : 1;
	gap     : 15px;
	padding : 14px 14px 13px;
}

.card {
	background : #fff;
}

.heading {
	display     : block;
	padding     : 1px 8px 2px;
	color       : #5e6f96;
	font-size   : 15px;
	font-weight : 700;
	line-height : 24px;
}

.between {
	display         : flex;
	justify-content : space-between;
	padding-bottom  : 3px;
}

.swatch {
	display        : inline-block;
	width          : 17px;
	height         : 17px;
	vertical-align : middle;
}

.olive { background : #abad42; }
.rose  { background : #ba7070; }
.red   { background : #f00; }
.amber { background : #f5c400; }
.green { background : #7aba00; }
.aqua  { background : #ccffff; }

.toolbar {
	display     : flex;
	align-items : center;
	gap         : 5px;
}

.tool {
	flex       : none;
	width      : 34px;
	height     : 28px;
	padding    : 0;
	border     : 0;
	background : #cce4f7;
}

.tool svg {
	width  : 34px;
	height : 28px;
	fill   : none;
}

.spaced { margin-left : 10px; }
.last   { margin-left : auto; }

.iconText {
	fill        : #000;
	font-family : 'Open Sans', sans-serif;
	font-size   : 13px;
	font-weight : 700;
}

.small { font-size : 12px; }

.iconNum {
	fill        : #000;
	font-family : 'Liberation Sans', sans-serif;
	font-size   : 14px;
}

.iconFx {
	fill        : #707070;
	font-family : 'Liberation Serif', serif;
	font-size   : 24px;
	font-style  : italic;
}

/* list */
.listCard {
	display        : flex;
	flex-direction : column;
	width          : 300px;
}

.list {
	flex       : 1;
	margin     : 2px 2px 0;
	background : linear-gradient(#e9e9e9, #e9e9e9) 30px 0 / 1px 100% no-repeat,
	             linear-gradient(#e9e9e9, #e9e9e9) 45px 0 / 1px 100% no-repeat,
	             linear-gradient(#e9e9e9, #e9e9e9) 100% 0 / 1px 100% no-repeat;
}

.listTable {
	width           : 295px;
	border-collapse : collapse;
	table-layout    : fixed;
}

.listTable td {
	height  : 27px;
	padding : 0;
}

.selected {
	background : #cce8ff;
	box-shadow : inset 1px 1px #0078d4, inset 0 -1px #0078d4;
}

.listColor { width : 30px; line-height : 0; }
.listNo    { width : 15px; text-align : center; }

.listColor .swatch {
	margin-left : 3px;
}

.listTable .listNo   { padding-left : 2px; }
.listTable .listName { padding-left : 4px; }

.listTools {
	height  : 40px;
	padding : 0 8px;
}

/* fields on top */
.editor {
	display        : flex;
	flex           : 1;
	flex-direction : column;
	min-width      : 0;
}

.topCards, .topLeft, .topRight {
	display : flex;
	gap     : 15px;
}

.topLeft  { flex : 527 1 0; }
.topRight { flex : 511 1 0; }

.field {
	height : 67px;
}

.grow        { flex  : 1; }
.noField     { width : 91px; }
.designField { width : 101px; }

.fieldRow {
	display     : flex;
	align-items : center;
	gap         : 8px;
	height      : 28px;
	margin      : 6px 8px 0;
}

.textBox {
	width      : 100%;
	height     : 28px;
	padding    : 2px 4px 0 3px;
	border     : 0;
	background : #e6e6e6;
}

.right {
	display    : block;
	width      : calc(100% - 16px);
	margin     : 6px 8px 0;
	text-align : right;
}

.lilac {
	background : #e6e6f2;
}

.check {
	appearance    : none;
	display       : block;
	width         : 20px;
	height        : 20px;
	margin        : 0;
	border-radius : 4px;
	background    : #005fb8;
}

.check::before {
	content       : '';
	display       : block;
	width         : 10px;
	height        : 5px;
	margin        : 6px 5px;
	border-left   : 1px solid #fff;
	border-bottom : 1px solid #fff;
	transform     : rotate(-45deg);
}

/* tabs */
.tabs {
	display     : flex;
	align-items : flex-end;
	height      : 30px;
	margin-top  : 15px;
}

.tab {
	height       : 29px;
	padding      : 2px 7px 0 8px;
	border       : 0;
	border-right : 1px solid #d1d0d6;
	background   : #dedede;
}

.first {
	width : 77px;
}

.active {
	height       : 31px;
	border-right : 0;
	background   : #ebebeb;
}

.tabPanel {
	display    : flex;
	flex       : 1;
	gap        : 15px;
	padding    : 13px 13px 0;
	background : #ebebeb;
}

.leftPane {
	display        : flex;
	flex           : 514 1 0;
	flex-direction : column;
	min-width      : 0;
}

.gridWrap {
	display  : flex;
	position : relative;
}

.grid {
	flex            : 1;
	width           : 100%;
	table-layout    : fixed;
	border-collapse : separate;
	border-spacing  : 0;
}

.colCheck {
	width : 30px;
}

.grid th {
	height        : 29px;
	padding       : 0;
	border-right  : 1px solid #d0d0d0;
	border-bottom : 1px solid #d0d0d0;
	background    : #f0f0f0;
	font-weight   : 400;
}

.grid .letters th {
	height        : 15px;
	border-bottom : 1px solid #fff;
	background    : #e1e1e1;
}

.grid td {
	height        : 24px;
	padding       : 0 4px;
	border-right  : 1px solid #dcdcdc;
	border-bottom : 1px solid #dcdcdc;
	line-height   : 22px;
}

.grid .tall td {
	height : 26px;
}

.grid .bottom td {
	height : 23px;
}

.grid .check {
	margin-bottom : 2px;
}

.grid .swatch {
	margin : -3px 8px 0 0;
}

.track {
	flex       : none;
	width      : 26px;
	background : #f0f0f0;
}

.thumb {
	width      : 11px;
	margin     : 0 8px;
	background : #868686;
}

.gridThumb {
	height     : 70px;
	margin-top : 66px;
}

/* red frame round the visible rows */
.marker {
	position       : absolute;
	top            : 44px;
	right          : 21px;
	bottom         : -3px;
	left           : -4px;
	border         : 5px solid #ff4346;
	pointer-events : none;
}

.componentTools {
	padding : 7px 8px 6px;
}

.library {
	margin-left : 154px;
}

/* settings */
.settings {
	display        : flex;
	flex           : 1;
	flex-direction : column;
	margin         : 7px 6px 0 -6px;
}

.settingsBody {
	flex : 1;
}

.treeWrap {
	flex       : 1;
	min-width  : 0;
	background : linear-gradient(#e1e1e1, #e1e1e1) 0 0 / 24px 100% no-repeat;
}

.tree {
	width          : 100%;
	table-layout   : fixed;
	border-spacing : 0;
}

.cGutter { width : 24px; }
.cLabel  { width : 199px; }
.cSymbol { width : 42px; }
.cV1     { width : 77px; }
.cV2     { width : 42px; }
.cV3     { width : 41px; }
.cUnit   { width : 63px; }

.tree td {
	height      : 24px;
	padding     : 0 4px;
	white-space : nowrap;
}

.group td {
	position   : relative;
	background : #e6e6e6;
}

.tree .group td:last-child {
	padding-left : 8px;
}

.tree .focus td {
	border-top    : 1px dotted #000;
	border-bottom : 1px dotted #000;
	background    : #e1e1e1;
	line-height   : 22px;
}

.tree .focus td:first-child {
	padding-left : 3px;
	border-left  : 1px dotted #000;
}

.tree .focus td:last-child {
	border-right : 1px dotted #000;
}

.toggle {
	display    : block;
	width      : 14px;
	height     : 14px;
	padding    : 0;
	border     : 1px solid #555;
	background : linear-gradient(#777, #777) 50% 50% / 8px 2px no-repeat #fff;
}

.line td:first-child,
.blank td:first-child {
	background : linear-gradient(#c4c4c4 50%, transparent 50%) 11px 0 / 1px 2px repeat-y;
}

.group ~ .group ~ .line td:first-child {
	background : none;
}

.tree .line td:nth-child(2) {
	position      : relative;
	overflow      : hidden;
	padding-left  : 38px;
	padding-right : 1px;
	border-right  : 1px solid #dcdcdc;
	background    : #f9faf4;
	text-overflow : ellipsis;
}

.line td:nth-child(2)::before {
	content       : '';
	position      : absolute;
	top           : 0;
	bottom        : 0;
	left          : 17px;
	border-left   : 1px dotted #aaa;
}

.line td:nth-child(2)::after {
	content    : '';
	position   : absolute;
	top        : 12px;
	left       : 17px;
	width      : 15px;
	border-top : 1px dotted #aaa;
}

.end td:nth-child(2)::before {
	bottom : 12px;
}

.line td:nth-child(3) {
	border-right : 1px solid #dcdcdc;
	background   : #f9faf4;
}

.num {
	text-align : right;
}

.tree .unit {
	border-left : 1px solid #dcdcdc;
	background  : #f9faf4;
}

.cut {
	border-left : 1px solid #dcdcdc;
}

.tree .tight {
	padding : 0 0 0 2px;
}

.tree .swatch {
	margin : -4px 6px 0 2px;
}

sub {
	font-size      : 14px;
	line-height    : 0;
	vertical-align : -1px;
}

.treeThumb {
	height     : 376px;
	margin-top : 25px;
}

.strip {
	height     : 12px;
	margin     : 0 0 -12px -6px;
	background : #ebebeb;
}

/* view */
.view {
	display        : flex;
	flex           : 498 1 0;
	flex-direction : column;
	min-width      : 0;
	margin-bottom  : 12px;
}

.sceneBox {
	flex     : 1;
	position : relative;
	overflow : hidden;
}

.scene {
	position : absolute;
	width    : 100%;
	height   : 100%;
}

.cube {
	font-size   : 13px;
	font-weight : 700;
}

.cubeTop {
	font-size : 9px;
}

.axisText {
	font-size : 15px;
}

.viewTools {
	height  : 40px;
	padding : 0 8px;
}

.viewTools .tool {
	width : 33px;
}

.toolGroup {
	display       : flex;
	align-items   : center;
	padding-right : 2px;
	background    : #cce4f7;
}

.pressed {
	outline        : 1px solid #005a9e;
	outline-offset : -1px;
}

.dot {
	width      : 2px;
	height     : 2px;
	margin     : 0 1px;
	background : #222;
}

.caret {
	width  : 10px;
	height : 6px;
	margin : 0 3px;
}

/* footer */
.footer {
	display     : flex;
	position    : relative;
	align-items : flex-start;
	gap         : 15px;
	height      : 63px;
	padding     : 15px 15px 0 14px;
	background  : #fff;
}

.colorBtn {
	width      : 28px;
	height     : 28px;
	border     : 1px solid #000;
	background : #f5c400;
}

.afterColor {
	margin-left : -10px;
}

.off {
	background : #e6e6e6;
}

.actions {
	display : flex;
	gap     : 14px;
	margin  : 1px 0 0 auto;
}

.action {
	width         : 122px;
	height        : 32px;
	padding       : 2px 0 0;
	border        : 1px solid #d0d0d0;
	border-radius : 4px;
	background    : #fdfdfd;
}

.primary {
	border-color : #0078d4;
}

.grip {
	position : absolute;
	right    : 2px;
	bottom   : 2px;
	width    : 12px;
	height   : 12px;
}
```
